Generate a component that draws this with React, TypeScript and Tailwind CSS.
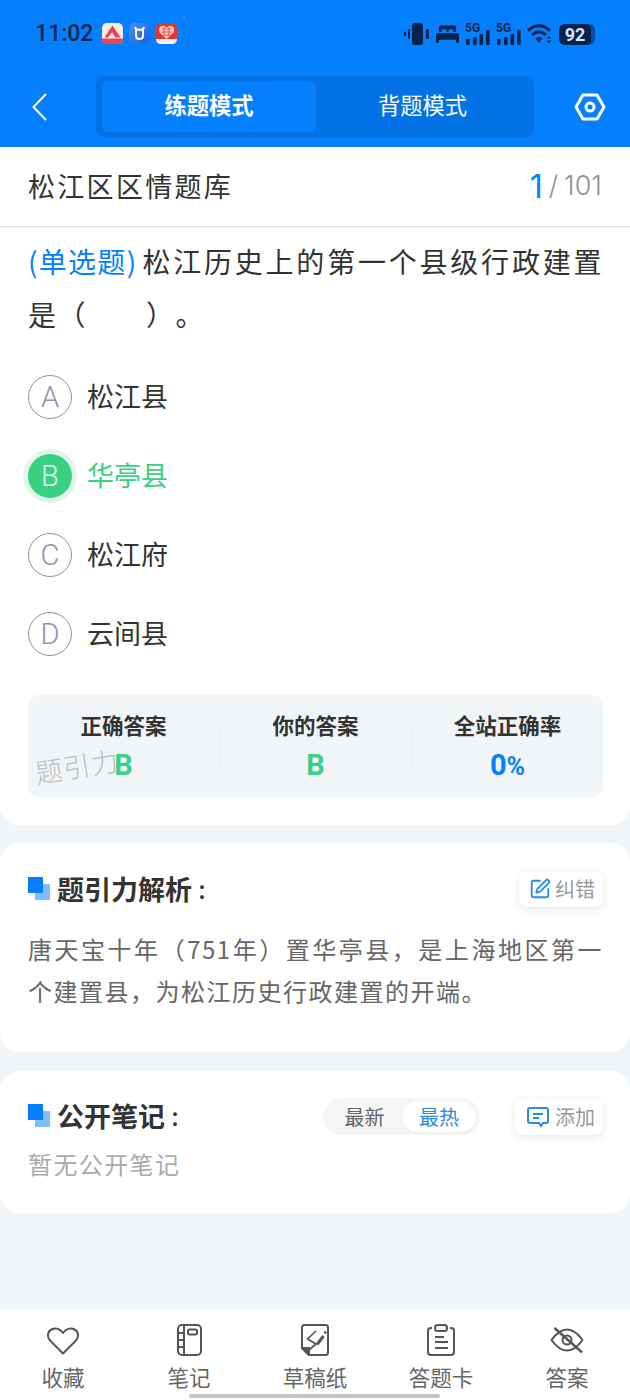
import { ReactNode } from 'react';
import { SquarePen } from 'lucide-react';

const cjk = { fontFamily: '"Noto Sans CJK SC", "Noto Sans", sans-serif' };

function StatusBar() {
  return (
    <div className="flex h-[68px] items-center justify-between pl-[35px] pr-[35px] text-[#06234d]">
      <div className="flex items-center gap-[9px] pb-[2px]">
        <span className="font-['Roboto',sans-serif] text-[23px] font-medium leading-none">11:02</span>
        <div className="flex items-center gap-[6px]">
          <svg width="21" height="21" viewBox="0 0 21 21">
            <rect width="21" height="21" rx="5" fill="#fbeaea" />
            <path d="M0 15.5 H21 V16 Q21 21 16 21 H5 Q0 21 0 16 Z" fill="#ec4452" />
            <path d="M2.5 14.5 L10.5 2.5 L18.5 14.5 L13.5 14.5 L10 9 L6 14.5 Z" fill="#ec3f4c" />
          </svg>
          <svg width="21" height="21" viewBox="0 0 21 21">
            <defs>
              <linearGradient id="cowBg" x1="0" y1="0" x2="1" y2="1">
                <stop offset="0" stopColor="#4a8df5" />
                <stop offset="1" stopColor="#1a5fe0" />
              </linearGradient>
            </defs>
            <rect width="21" height="21" rx="5" fill="url(#cowBg)" />
            <path d="M7 7 V12.5 Q7 16 10.5 16 Q14 16 14 12.5 V7 M6 4 Q6.5 6.8 9 6.8 H12 Q14.5 6.8 15 4" fill="none" stroke="#fff" strokeWidth="2" />
          </svg>
          <svg width="21" height="21" viewBox="0 0 21 21">
            <rect width="21" height="21" rx="5" fill="#e4352f" />
            <path d="M0 16 H21 Q21 21 16 21 H5 Q0 21 0 16 Z" fill="#fbeee8" />
            <path d="M10.5 16 L3.5 9.5 Q1.5 3.5 6.5 3 Q9.3 2.8 10.5 5 Q11.7 2.8 14.5 3 Q19.5 3.5 17.5 9.5 Z" fill="#f6cfc6" />
            <path d="M6 6 H15 M5 9 H16 M7.5 12 H13.5 M8 4 V13 M13 4 V13" stroke="#e4352f" strokeWidth="0.8" fill="none" />
          </svg>
        </div>
      </div>
      <div className="flex items-center gap-[6px]">
        <svg width="26" height="22" viewBox="0 0 26 22" fill="currentColor">
          <rect x="8" y="0" width="11" height="22" rx="3" />
          <rect x="4" y="6" width="2" height="10" rx="1" />
          <rect x="0" y="8.5" width="2" height="5" rx="1" />
          <rect x="22" y="6" width="3" height="10" rx="1" />
        </svg>
        <svg width="23" height="18" viewBox="0 0 24 18" fill="currentColor">
          <path d="M3 2 Q3 0 5 0 H19 Q21 0 21 2 V7 H18 V5 Q18 4 17 4 H14 Q13 4 13 5 V7 H11 V5 Q11 4 10 4 H7 Q6 4 6 5 V7 H3 Z" />
          <path d="M2 8 H22 Q24 8 24 10 V18 H21 V15 H3 V18 H0 V10 Q0 8 2 8 Z" />
        </svg>
        <SignalIcon />
        <SignalIcon />
        <svg width="26" height="22" viewBox="0 0 26 22">
          <path d="M1 7.5 Q12 -2 23 7.5" fill="none" stroke="currentColor" strokeWidth="3" />
          <path d="M5 12 Q12 5.5 19 12" fill="none" stroke="currentColor" strokeWidth="3" />
          <path d="M8.5 15.5 Q12 12.5 15.5 15.5 L12 20 Z" fill="currentColor" />
          <path d="M19.5 15.5 L22 13 L24.5 15.5 Z M19.5 17.5 H24.5 L22 20.5 Z" fill="currentColor" />
        </svg>
        <div className="flex h-[21px] w-[36px] overflow-hidden rounded-[6px] bg-[#0a4f9e]">
          <div className="flex h-[21px] w-[32px] items-center justify-center rounded-[5px] bg-[#06234d] font-['Roboto',sans-serif] text-[18px] font-bold text-[#d6e6ff]">
            92
          </div>
        </div>
      </div>
    </div>
  );
}

function SignalIcon() {
  return (
    <div className="relative h-[22px] w-[25px]">
      <span className="absolute left-0 top-[-1px] font-['Roboto',sans-serif] text-[12px] font-bold leading-none">5G</span>
      <svg width="25" height="22" viewBox="0 0 25 22" fill="currentColor">
        <rect x="1" y="16" width="3.6" height="6" rx="1" />
        <rect x="8" y="14" width="3.6" height="8" rx="1" />
        <rect x="14.5" y="11" width="3.6" height="11" rx="1" />
        <rect x="21" y="7" width="3.6" height="15" rx="1" />
      </svg>
    </div>
  );
}

function Option({ letter, text, active }: { letter: string; text: string; active?: boolean }) {
  return (
    <div className="flex h-[79px] items-center gap-[15px]">
      {active ? (
        <div className="flex h-[44px] w-[44px] items-center justify-center rounded-full bg-[#3ad082] pt-[2px] font-['Roboto',sans-serif] text-[29px] font-light text-[#e3f8ec] shadow-[0_0_0_5px_#e2f7ec]">
          {letter}
        </div>
      ) : (
        <div className="flex h-[44px] w-[44px] items-center justify-center rounded-full border-[1.5px] border-[#8d92ab] pt-[2px] font-['Roboto',sans-serif] text-[29px] font-light text-[#8d92ab]">
          {letter}
        </div>
      )}
      <span className={`text-[27px] ${active ? 'text-[#3ad082]' : 'text-[#333333]'}`}>{text}</span>
    </div>
  );
}

function Stat({ label, children }: { label: string; children: ReactNode }) {
  return (
    <div className="flex flex-1 flex-col items-center">
      <span className="text-[21.5px] font-bold leading-[31px] text-[#333333]">{label}</span>
      <div className="mt-[7px] h-[36px] font-['Roboto',sans-serif] text-[29px] font-bold leading-[36px]">{children}</div>
    </div>
  );
}

function SectionTitle({ children }: { children: ReactNode }) {
  return (
    <div className="flex items-center gap-[7px] pb-[2px]">
      <div className="relative h-[23px] w-[22px]">
        <div className="absolute bottom-0 right-0 h-[16px] w-[15px] bg-[#80bdff]" />
        <div className="absolute left-0 top-0 h-[16px] w-[15px] bg-[#0480ff]" />
      </div>
      <span className="text-[27px] font-bold leading-none text-[#333333]">
        {children}
        <span className="font-['Noto_Sans_CJK_TC',sans-serif] text-[20px]">：</span>
      </span>
    </div>
  );
}

function TabItem({ label, icon }: { label: string; icon: ReactNode }) {
  return (
    <div className="flex w-[126px] flex-col items-center">
      <div className="flex h-[36px] items-end justify-center">{icon}</div>
      <span className="mt-[6px] text-[21.5px] leading-[30px] text-[#666666]">{label}</span>
    </div>
  );
}

export default function App() {
  return (
    <div className="relative flex h-[1400px] w-[630px] flex-col overflow-hidden bg-[#f2f5f8] [text-spacing-trim:space-all]" style={cjk}>
      <div className="h-[147px] bg-[#0480ff]">
        <StatusBar />
        <div className="mt-[8px] flex h-[61px] items-center pl-[32px]">
          <svg width="15" height="28" viewBox="0 0 15 28" fill="none" stroke="#fff" strokeWidth="2">
            <path d="M14 1 L1.5 14 L14 27" />
          </svg>
          <div className="ml-[49px] flex h-[61px] w-[438px] rounded-[8px] bg-[#0272e6] p-[5px] pl-[6px]">
            <div className="flex h-[51px] w-[214px] items-center justify-center rounded-[6px] bg-[#0480ff] pb-[3px] text-[22.3px] font-bold text-white">
              练题模式
            </div>
            <div className="flex flex-1 items-center justify-center pb-[3px] text-[22.3px] text-white">背题模式</div>
          </div>
          <svg width="32" height="28" viewBox="0 0 32 28" fill="none" stroke="#fff" strokeWidth="3" className="ml-[40px]">
            <path d="M9 2 H23 L30 14 L23 26 H9 L2 14 Z" strokeLinejoin="round" />
            <circle cx="16" cy="14" r="4" />
          </svg>
        </div>
      </div>

      {/* Question card */}
      <div className="h-[678px] rounded-b-[20px] bg-white">
        <div className="flex h-[80px] items-center justify-between border-b border-[#dddddd] pl-[28px] pr-[28px]">
          <span className="text-[27px] tracking-[2.3px] text-[#333333]">松江区区情题库</span>
          <span className="flex items-center font-['Inter',sans-serif] text-[27px] font-light text-[#8f8f8f]">
            <span className="text-[32px] font-normal text-[#0480ff]">1</span>
            <span className="ml-[6px] mr-[6px]">/</span>
            101
          </span>
        </div>
        <div className="ml-[28px] mr-[27px] mt-[8px] text-justify text-[28px] leading-[53px] tracking-[1.5px] text-[#333333]">
          <span className="mr-[5px] tracking-normal text-[#0480ff]">(单选题)</span>松江历史上的第一个县级行政建置是（　　）。
        </div>
        <div className="mt-[16px] px-[28px]">
          <Option letter="A" text="松江县" />
          <Option letter="B" text="华亭县" active />
          <Option letter="C" text="松江府" />
          <Option letter="D" text="云间县" />
        </div>
        <div className="relative ml-[28px] mr-[27px] mt-[22px] flex h-[102px] items-center rounded-[10px] bg-[#f2f5f8]">
          <Stat label="正确答案"><span className="text-[#3ad082]">B</span></Stat>
          <div className="h-[38px] w-px bg-[#e8ebee]" />
          <Stat label="你的答案"><span className="text-[#3ad082]">B</span></Stat>
          <div className="h-[38px] w-px bg-[#e8ebee]" />
          <Stat label="全站正确率">
            <span className="text-[#0480ff]">0<span className="text-[25px]">%</span></span>
          </Stat>
          <span className="absolute left-[7px] top-[57px] -rotate-[9deg] text-[27px] font-light leading-none tracking-[1px] text-[#bcbcbc]">题引力</span>
        </div>
      </div>

      {/* Analysis card */}
      <div className="mt-[18px] h-[209px] rounded-[20px] bg-white pl-[28px] pr-[27px] pt-[28px]">
        <div className="flex items-center justify-between">
          <SectionTitle>题引力解析</SectionTitle>
          <div className="flex h-[36px] items-center gap-[4px] rounded-[8px] bg-white pl-[10px] pr-[8px] text-[20px] text-[#999999] shadow-[0_2px_8px_rgba(0,0,0,0.1)]">
            <SquarePen size={22} strokeWidth={2} className="text-[#2b8ae6]" />
            纠错
          </div>
        </div>
        <p className="mt-[21px] text-justify text-[24px] leading-[42px] tracking-[1.5px] text-[#666666]">
          唐天宝十年（751年）置华亭县，是上海地区第一个建置县，为松江历史行政建置的开端。
        </p>
      </div>

      {/* Notes card */}
      <div className="mt-[19px] h-[142px] rounded-[20px] bg-white pl-[28px] pr-[27px] pt-[27px]">
        <div className="flex items-center justify-between">
          <SectionTitle>公开笔记</SectionTitle>
          <div className="flex items-center gap-[35px]">
            <div className="flex h-[37px] w-[157px] items-center rounded-full bg-[#f5f5f5] p-[4px] text-[20px]">
              <div className="flex w-[75px] items-center justify-center text-[#666666]">最新</div>
              <div className="flex h-[30px] flex-1 items-center justify-center rounded-full bg-white text-[#2b8ae6] shadow-[0_1px_3px_rgba(0,0,0,0.06)]">最热</div>
            </div>
            <div className="flex h-[36px] items-center gap-[6px] rounded-[8px] bg-white pl-[12px] pr-[8px] text-[20px] text-[#999999] shadow-[0_2px_8px_rgba(0,0,0,0.1)]">
              <svg width="22" height="20" viewBox="0 0 22 20" fill="none" stroke="#2b8ae6" strokeWidth="2">
                <path d="M3 1 H19 Q21 1 21 3 V14 Q21 16 19 16 H16 L14 19 L12 16 H3 Q1 16 1 14 V3 Q1 1 3 1 Z" />
                <path d="M6 7 H16 M6 11 H12" />
              </svg>
              添加
            </div>
          </div>
        </div>
        <p className="mt-[12px] text-[24px] leading-[34px] tracking-[1.4px] text-[#aaaaaa]">暂无公开笔记</p>
      </div>

      {/* Tab bar */}
      <div className="mt-auto flex h-[91px] bg-white pt-[11px]">
        <TabItem
          label="收藏"
          icon={
            <svg width="32" height="28" viewBox="0 0 32 28" fill="none" stroke="#555" strokeWidth="2" className="mb-[1px]">
              <path d="M16 26.5 L3.5 14 C-0.5 10 0.5 4.5 4.5 2.5 C8.5 0.5 13 2 16 6 C19 2 23.5 0.5 27.5 2.5 C31.5 4.5 32.5 10 28.5 14 Z" strokeLinejoin="round" />
            </svg>
          }
        />
        <TabItem
          label="笔记"
          icon={
            <svg width="25" height="32" viewBox="0 0 25 32" fill="none" stroke="#555" strokeWidth="2">
              <rect x="1" y="1" width="23" height="30" rx="4" />
              <path d="M7 1 V31 M1 9 H7 M1 16 H7 M1 23 H7" />
              <rect x="11" y="5.5" width="9" height="5" rx="1.5" />
            </svg>
          }
        />
        <TabItem
          label="草稿纸"
          icon={
            <svg width="28" height="32" viewBox="0 0 28 32" fill="none" stroke="#555" strokeWidth="2">
              <path d="M8 31 H24.5 Q27 31 27 28.5 V3.5 Q27 1 24.5 1 H3.5 Q1 1 1 3.5 V24 L8 31" strokeLinejoin="round" />
              <path d="M1 24 H8 V31 Z" fill="#555" />
              <path d="M15 7 L6.5 15 L15 20 L8 26" strokeWidth="1.7" strokeLinejoin="round" />
              <path d="M16 20.5 L22.5 12" strokeWidth="3" />
              <path d="M23.5 9.5 L25 7.5" strokeWidth="2.4" />
            </svg>
          }
        />
        <TabItem
          label="答题卡"
          icon={
            <svg width="28" height="32" viewBox="0 0 28 32" fill="none" stroke="#555" strokeWidth="2">
              <path d="M5 4 H4 Q1 4 1 7 V28 Q1 31 4 31 H24 Q27 31 27 28 V7 Q27 4 24 4 H23" />
              <rect x="8" y="1" width="12" height="6" rx="2.5" />
              <path d="M8 13 H17 M8 18 H21 M8 24 H21" />
            </svg>
          }
        />
        <TabItem
          label="答案"
          icon={
            <svg width="34" height="26" viewBox="0 0 34 26" fill="none" stroke="#555" strokeWidth="2" className="mb-[3px]">
              <path d="M1.5 13 Q9 2.5 17 2.5 Q25 2.5 32.5 13 Q25 23.5 17 23.5 Q9 23.5 1.5 13 Z" strokeLinejoin="round" />
              <circle cx="17" cy="13" r="4.5" />
              <path d="M4.5 1 L32 25.5" strokeWidth="2.4" />
            </svg>
          }
        />
      </div>
      <div className="absolute bottom-[2px] left-[189px] h-[4px] w-[251px] rounded-full bg-[#c4c4c4]" />
    </div>
  );
}
